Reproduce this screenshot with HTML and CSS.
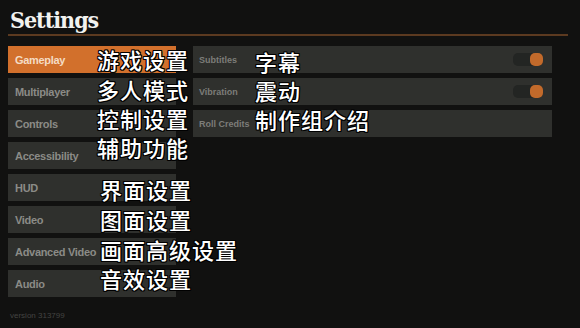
FILE: index.html
```html
<!DOCTYPE html>
<html lang="en">
<head>
  <meta charset="UTF-8" />
  <title>Settings</title>
  <link rel="stylesheet" href="styles.css">
</head>
<body>
  <header class="top">
    <h1>Settings</h1>
  </header>

  <main class="layout">
    <nav class="menu">
      <a href="#" class="menu-item active">Gameplay</a>
      <a href="#" class="menu-item">Multiplayer</a>
      <a href="#" class="menu-item">Controls</a>
      <a href="#" class="menu-item">Accessibility</a>
      <a href="#" class="menu-item">HUD</a>
      <a href="#" class="menu-item">Video</a>
      <a href="#" class="menu-item">Advanced Video</a>
      <a href="#" class="menu-item">Audio</a>
    </nav>

    <section class="options">
      <div class="option">
        <span>Subtitles</span>
        <span class="toggle on"><span class="knob"></span></span>
      </div>
      <div class="option">
        <span>Vibration</span>
        <span class="toggle on"><span class="knob"></span></span>
      </div>
      <div class="option">
        <span>Roll Credits</span>
      </div>
    </section>
  </main>

  <p class="version">version 313799</p>

  <!-- translation captions laid over the menu -->
  <div class="captions">
    <span class="cap c1">游戏设置</span>
    <span class="cap c2">多人模式</span>
    <span class="cap c3">控制设置</span>
    <span class="cap c4">辅助功能</span>
    <span class="cap c5">界面设置</span>
    <span class="cap c6">图面设置</span>
    <span class="cap c7">画面高级设置</span>
    <span class="cap c8">音效设置</span>
    <span class="cap r1">字幕</span>
    <span class="cap r2">震动</span>
    <span class="cap r3">制作组介绍</span>
  </div>
</body>
</html>
```

FILE: styles.css
```css
body {
  margin: 0;
  width: 580px;
  height: 328px;
  overflow: hidden;
  position: relative;
  background-color: #111110;
  font-family: 'Liberation Sans', Arial, sans-serif;
}

.top {
  margin: 0 12px 0 8px;
  padding-top: 5px;
  border-bottom: 2px solid #5c3a20;
}

.top h1 {
  margin: 0;
  font-family: 'DejaVu Serif', serif;
  font-stretch: condensed;
  font-weight: bold;
  font-size: 23px;
  line-height: 29px;
  letter-spacing: -1px;
  color: #f2f2ef;
  padding-left: 2px;
}

.layout {
  display: flex;
  gap: 17px;
  margin: 10px 0 0 8px;
}

.menu {
  display: flex;
  flex-direction: column;
  gap: 5px;
  width: 168px;
}

.menu-item {
  display: flex;
  align-items: center;
  height: 27px;
  padding-left: 7px;
  background-color: #2f302d;
  color: #8b8b87;
  font-weight: bold;
  font-size: 11px;
  letter-spacing: -0.3px;
  text-decoration: none;
}

.menu-item.active {
  background-color: #d2702c;
  color: #f4dcc4;
}

.options {
  display: flex;
  flex-direction: column;
  gap: 5px;
  width: 359px;
}

.option {
  display: flex;
  align-items: center;
  justify-content: space-between;
  height: 27px;
  padding: 0 9px 0 6px;
  background-color: #2f302d;
  color: #7d7d79;
  font-weight: bold;
  font-size: 9px;
}

.toggle {
  display: flex;
  align-items: center;
  justify-content: flex-end;
  width: 30px;
  height: 13px;
  border-radius: 5px;
  background-color: #232523;
}

.knob {
  width: 13px;
  height: 13px;
  border-radius: 5px;
  background-color: #c26a2b;
}

.version {
  position: absolute;
  left: 10px;
  top: 311px;
  margin: 0;
  font-size: 8px;
  color: #444442;
}

.cap {
  position: absolute;
  font-family: 'Noto Sans CJK SC', sans-serif;
  font-weight: 500;
  font-size: 22px;
  line-height: 22px;
  letter-spacing: 1px;
  color: #fff;
  text-shadow: -1px -1px 0 #000, 1px -1px 0 #000, -1px 1px 0 #000, 1px 1px 0 #000,
    0 1px 0 #000, 0 -1px 0 #000, 1px 0 0 #000, -1px 0 0 #000;
}

.c1 { left: 97px; top: 48px; }
.c2 { left: 97px; top: 78px; }
.c3 { left: 97px; top: 107px; }
.c4 { left: 97px; top: 136px; }
.c5 { left: 100px; top: 178px; }
.c6 { left: 100px; top: 208px; }
.c7 { left: 100px; top: 238px; }
.c8 { left: 100px; top: 267px; }
.r1 { left: 255px; top: 50px; }
.r2 { left: 255px; top: 79px; }
.r3 { left: 255px; top: 108px; }
```
